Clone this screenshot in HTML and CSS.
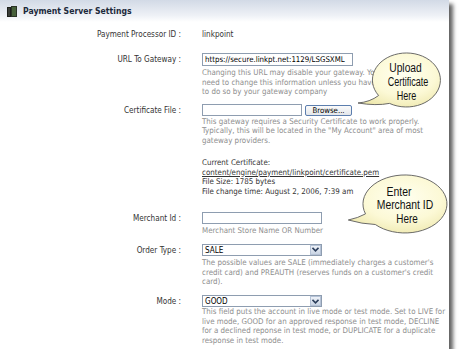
FILE: index.html
```html
<!DOCTYPE html>
<html>
<head>
<meta charset="utf-8">
<link rel="stylesheet" href="styles.css">
</head>
<body>
<div class="panel">
  <div class="head">
    <svg class="head-icon" width="10" height="11" viewBox="0 0 10 11">
      <rect x="0" y="1" width="10" height="10" fill="#1d1f1c"/>
      <rect x="4" y="0" width="6" height="11" fill="#2a3326"/>
      <rect x="5" y="1" width="4" height="9" fill="#46603a"/>
      <rect x="1" y="2" width="2" height="8" fill="#3a3d38"/>
    </svg>
    <span class="head-title">Payment Server Settings</span>
  </div>
  <div class="form">
    <div class="row r1">
      <div class="lbl">Payment Processor ID :</div>
      <div class="val"><div class="plain">linkpoint</div></div>
    </div>
    <div class="row r2">
      <div class="lbl">URL To Gateway :</div>
      <div class="val">
        <div class="input w-url">https://secure.linkpt.net:1129/LSGSXML</div>
        <div class="help">Changing this URL may disable your gateway. You should not<br>need to change this information unless you have been told<br>to do so by your gateway company</div>
      </div>
    </div>
    <div class="row r3">
      <div class="lbl">Certificate File :</div>
      <div class="val">
        <div class="file">
          <div class="input w-file"></div>
          <div class="btn">Browse...</div>
        </div>
        <div class="help h-cert">This gateway requires a Security Certificate to work properly.<br>Typically, this will be located in the "My Account" area of most<br>gateway providers.</div>
        <div class="info">Current Certificate:<br><span class="link">content/engine/payment/linkpoint/certificate.pem</span><br>File Size: 1785 bytes<br>File change time: August 2, 2006, 7:39 am</div>
      </div>
    </div>
    <div class="row r4">
      <div class="lbl">Merchant Id :</div>
      <div class="val">
        <div class="input w-merch"></div>
        <div class="help h-merch">Merchant Store Name OR Number</div>
      </div>
    </div>
    <div class="row r5">
      <div class="lbl">Order Type :</div>
      <div class="val">
        <div class="select"><span class="select-value">SALE</span><span class="select-btn"><svg width="7" height="5" viewBox="0 0 7 5"><path d="M0.5 0.8 L3.5 3.8 L6.5 0.8" fill="none" stroke="#2c3e5c" stroke-width="1.6"/></svg></span></div>
        <div class="help h-order">The possible values are SALE (immediately charges a customer's<br>credit card) and PREAUTH (reserves funds on a customer's credit<br>card).</div>
      </div>
    </div>
    <div class="row r6">
      <div class="lbl">Mode :</div>
      <div class="val">
        <div class="select"><span class="select-value">GOOD</span><span class="select-btn"><svg width="7" height="5" viewBox="0 0 7 5"><path d="M0.5 0.8 L3.5 3.8 L6.5 0.8" fill="none" stroke="#2c3e5c" stroke-width="1.6"/></svg></span></div>
        <div class="help h-mode">This field puts the account in live mode or test mode. Set to LIVE for<br>live mode, GOOD for an approved response in test mode, DECLINE<br>for a declined reponse in test mode, or DUPLICATE for a duplicate<br>response in test mode.</div>
      </div>
    </div>
  </div>
  <svg class="callouts" width="460" height="362" viewBox="0 0 460 362">
    <defs>
      <radialGradient id="bub" cx="0.55" cy="0.4" r="0.65">
        <stop offset="0" stop-color="#fffff0"/>
        <stop offset="0.6" stop-color="#fcf9d6"/>
        <stop offset="1" stop-color="#efe9b0"/>
      </radialGradient>
    </defs>
    <path d="M 378.6 95.5 Q 370 102 358 103 Q 376 106 389.5 103.4 A 34 27 0 1 0 378.6 95.5 Z" fill="url(#bub)" stroke="#5a5a5a" stroke-width="0.9"/>
    <text class="bubble-text" x="405.5" y="72.3" textLength="32.5" lengthAdjust="spacingAndGlyphs">Upload</text>
    <text class="bubble-text" x="408" y="86.3" textLength="40.5" lengthAdjust="spacingAndGlyphs">Certificate</text>
    <text class="bubble-text" x="406.5" y="99.5" textLength="19.5" lengthAdjust="spacingAndGlyphs">Here</text>
    <path d="M 365.5 213.9 Q 358 218 348.3 220 Q 362 224 375.3 224.5 A 42 29 0 1 0 365.5 213.9 Z" fill="url(#bub)" stroke="#5a5a5a" stroke-width="0.9"/>
    <text class="bubble-text" x="399" y="195.7" textLength="25" lengthAdjust="spacingAndGlyphs">Enter</text>
    <text class="bubble-text" x="405" y="209.2" textLength="56.5" lengthAdjust="spacingAndGlyphs">Merchant ID</text>
    <text class="bubble-text" x="407" y="222.5" textLength="21.5" lengthAdjust="spacingAndGlyphs">Here</text>
  </svg>
</div>
</body>
</html>
```
FILE: styles.css
```css
html, body {
  margin: 0;
  padding: 0;
  background: #ffffff;
}
body {
  font-family: "DejaVu Sans Condensed", "Liberation Sans", Arial, sans-serif;
}
.panel {
  position: relative;
  width: 449px;
  height: 349px;
  background: #ffffff;
  box-shadow: 4px 4px 4px rgba(0, 0, 0, 0.62);
}
.head {
  height: 22px;
  display: flex;
  align-items: center;
  padding-left: 7px;
  gap: 6px;
  background: linear-gradient(#d2dae6, #eef1f6 70%, #ffffff);
}
.head-icon {
  display: block;
}
.head-title {
  font-weight: bold;
  font-size: 8.6px;
  color: #1d2a3c;
}
.form {
  padding-top: 5.5px;
}
.row {
  display: grid;
  grid-template-columns: 181px 242px;
  column-gap: 21px;
  align-items: start;
}
.lbl {
  text-align: right;
  font-size: 8.1px;
  line-height: 13px;
  color: #333333;
  white-space: nowrap;
}
.val {
  font-size: 8.1px;
  color: #333333;
}
.plain {
  line-height: 13px;
}
.r2 { margin-top: 12px; }
.r3 { margin-top: 7.5px; }
.r4 { margin-top: 15.5px; }
.r5 { margin-top: 8px; }
.r6 { margin-top: 8.5px; }
.r3 .lbl, .r4 .lbl, .r5 .lbl, .r6 .lbl {
  line-height: 12px;
}
.input {
  box-sizing: border-box;
  height: 13px;
  border: 1px solid #8e9db0;
  background: #ffffff;
  font-size: 7.8px;
  line-height: 11px;
  padding-left: 2px;
  color: #000000;
  white-space: nowrap;
  overflow: hidden;
}
.w-url { width: 151px; }
.w-file { width: 100px; height: 12px; }
.w-merch { width: 120px; height: 12.5px; }
.file {
  display: flex;
  align-items: flex-start;
  gap: 3px;
}
.btn {
  box-sizing: border-box;
  margin-top: 1px;
  width: 47px;
  height: 11px;
  border: 1px solid #5c7eae;
  border-radius: 2px;
  background: linear-gradient(#fbfbfb, #e3e6ea);
  font-size: 7.8px;
  line-height: 9px;
  text-align: center;
  color: #000000;
}
.help {
  color: #8e8e8e;
  font-size: 7.9px;
  line-height: 9.5px;
  white-space: nowrap;
  margin-top: 2.5px;
}
.h-cert { margin-top: 0.5px; }
.h-merch { margin-top: 2px; }
.h-mode { margin-top: 0; }
.info {
  margin-top: 13px;
  font-size: 7.9px;
  line-height: 9.5px;
  color: #333333;
  white-space: nowrap;
}
.link {
  text-decoration: underline;
}
.select {
  box-sizing: border-box;
  display: flex;
  width: 120px;
  height: 12px;
  border: 1px solid #8e9db0;
  background: #ffffff;
}
.select-value {
  flex: 1;
  font-size: 8.1px;
  line-height: 10px;
  padding-left: 2px;
  color: #000000;
}
.select-btn {
  box-sizing: border-box;
  width: 11px;
  height: 10px;
  display: flex;
  align-items: center;
  justify-content: center;
  background: linear-gradient(#eef2f8, #c9d4e4);
  border: 1px solid #b5c2d6;
}
.select-btn svg {
  display: block;
}
.callouts {
  position: absolute;
  top: 0;
  left: 0;
  pointer-events: none;
  overflow: visible;
}
.bubble-text {
  font-family: "Liberation Sans", Arial, sans-serif;
  font-size: 12px;
  fill: #111111;
  text-anchor: middle;
}
```
